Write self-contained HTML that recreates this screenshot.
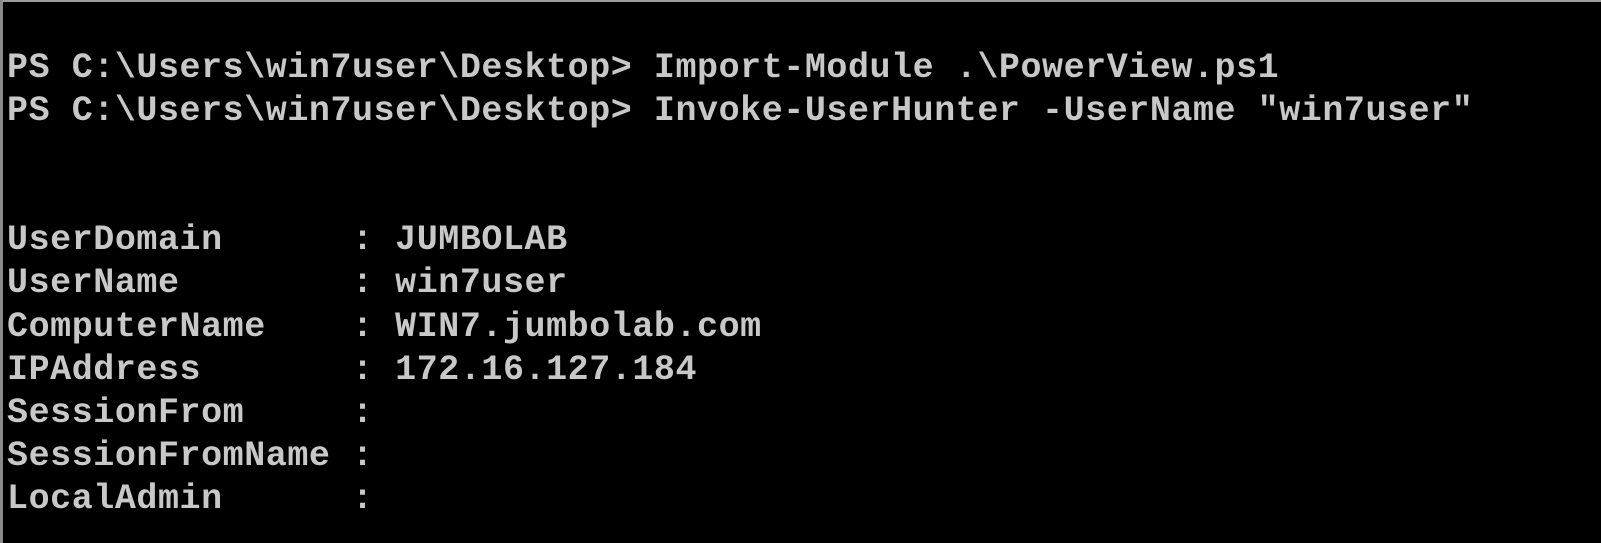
<!DOCTYPE html>
<html><head><style>
html,body{margin:0;padding:0;}
body{width:1601px;height:543px;background:#000;overflow:hidden;position:relative;}
.bt{position:absolute;left:0;top:0;width:1601px;height:2px;background:#9a9a9a;}
.bl{position:absolute;left:0;top:0;width:3px;height:543px;background:#8a8a8a;}
pre{position:absolute;left:7px;top:47px;margin:0;font-family:"Liberation Mono",monospace;font-weight:bold;font-size:35px;line-height:43.1px;color:#c8c8c8;letter-spacing:0.56px;}
</style></head><body>
<div class="bt"></div><div class="bl"></div>
<pre>PS C:\Users\win7user\Desktop&gt; Import-Module .\PowerView.ps1
PS C:\Users\win7user\Desktop&gt; Invoke-UserHunter -UserName "win7user"


UserDomain      : JUMBOLAB
UserName        : win7user
ComputerName    : WIN7.jumbolab.com
IPAddress       : 172.16.127.184
SessionFrom     :
SessionFromName :
LocalAdmin      :</pre>
</body></html>
